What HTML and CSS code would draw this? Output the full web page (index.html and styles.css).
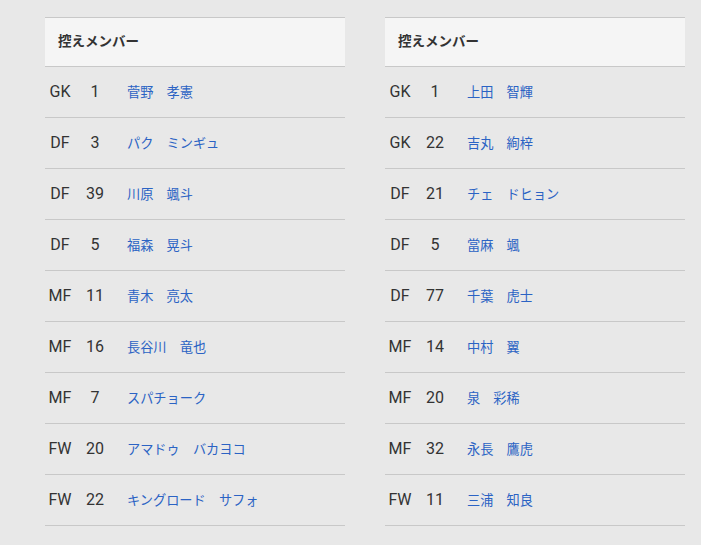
FILE: index.html
```html
<!DOCTYPE html>
<html lang="ja">
<head>
    <meta charset="UTF-8">
    <meta name="viewport" content="width=device-width, initial-scale=1.0">
    <title>控えメンバー</title>

    <link rel="stylesheet" href="styles.css">
</head>
<body>
    <div class="teams">
        <section class="bench">
            <div class="bench-title">控えメンバー</div>
            <div class="row"><span class="pos">GK</span><span class="num">1</span><a class="name" href="#">菅野　孝憲</a></div>
            <div class="row"><span class="pos">DF</span><span class="num">3</span><a class="name" href="#">パク　ミンギュ</a></div>
            <div class="row"><span class="pos">DF</span><span class="num">39</span><a class="name" href="#">川原　颯斗</a></div>
            <div class="row"><span class="pos">DF</span><span class="num">5</span><a class="name" href="#">福森　晃斗</a></div>
            <div class="row"><span class="pos">MF</span><span class="num">11</span><a class="name" href="#">青木　亮太</a></div>
            <div class="row"><span class="pos">MF</span><span class="num">16</span><a class="name" href="#">長谷川　竜也</a></div>
            <div class="row"><span class="pos">MF</span><span class="num">7</span><a class="name" href="#">スパチョーク</a></div>
            <div class="row"><span class="pos">FW</span><span class="num">20</span><a class="name" href="#">アマドゥ　バカヨコ</a></div>
            <div class="row"><span class="pos">FW</span><span class="num">22</span><a class="name" href="#">キングロード　サフォ</a></div>
        </section>
        <section class="bench">
            <div class="bench-title">控えメンバー</div>
            <div class="row"><span class="pos">GK</span><span class="num">1</span><a class="name" href="#">上田　智輝</a></div>
            <div class="row"><span class="pos">GK</span><span class="num">22</span><a class="name" href="#">吉丸　絢梓</a></div>
            <div class="row"><span class="pos">DF</span><span class="num">21</span><a class="name" href="#">チェ　ドヒョン</a></div>
            <div class="row"><span class="pos">DF</span><span class="num">5</span><a class="name" href="#">當麻　颯</a></div>
            <div class="row"><span class="pos">DF</span><span class="num">77</span><a class="name" href="#">千葉　虎士</a></div>
            <div class="row"><span class="pos">MF</span><span class="num">14</span><a class="name" href="#">中村　翼</a></div>
            <div class="row"><span class="pos">MF</span><span class="num">20</span><a class="name" href="#">泉　彩稀</a></div>
            <div class="row"><span class="pos">MF</span><span class="num">32</span><a class="name" href="#">永長　鷹虎</a></div>
            <div class="row"><span class="pos">FW</span><span class="num">11</span><a class="name" href="#">三浦　知良</a></div>
        </section>
    </div>
</body>
</html>
```

FILE: styles.css
```css
body {
    margin: 0;
    background: #e8e8e8;
    color: #333;
    font-family: Roboto, "Noto Sans CJK JP", sans-serif;
    font-size: 16px;
}

.teams {
    display: flex;
    gap: 40px;
    padding: 17px 16px 0 45px;
}

.bench {
    width: 300px;
}

.bench-title {
    height: 48px;
    line-height: 44px;
    padding-left: 13px;
    background: #f5f5f5;
    border-top: 1px solid #c8c8c8;
    border-bottom: 1px solid #c8c8c8;
    font-family: "Noto Sans CJK JP", sans-serif;
    font-weight: bold;
    font-size: 13.5px;
}

.row {
    display: flex;
    align-items: center;
    height: 48px;
    padding-bottom: 2px;
    border-bottom: 1px solid #c8c8c8;
}

.pos {
    width: 30px;
    text-align: center;
}

.num {
    width: 40px;
    text-align: center;
}

.name {
    padding-left: 12px;
    color: #2b63c4;
    text-decoration: none;
    font-family: "Noto Sans CJK JP", sans-serif;
    font-size: 13.2px;
}
```
